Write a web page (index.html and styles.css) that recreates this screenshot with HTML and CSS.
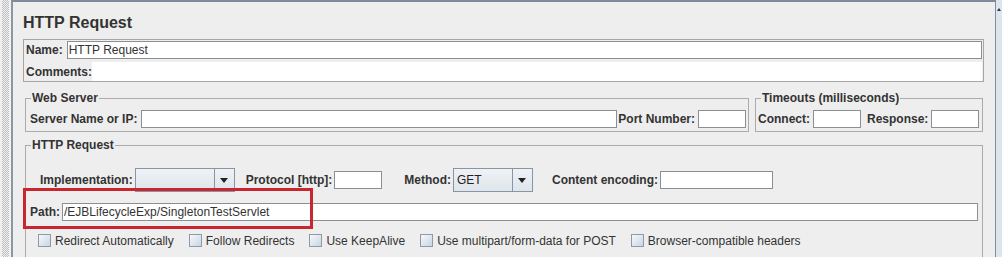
FILE: index.html
```html
<!DOCTYPE html>
<html lang="en">
<head>
  <meta charset="UTF-8">
  <title>HTTP Request</title>
  <link rel="stylesheet" href="styles.css">
</head>
<body>

<div class="frame">
  <div class="splitter"></div>

  <div class="panel">
    <h1 class="title">HTTP Request</h1>

    <!-- Name / comments -->
    <div class="name-box">
      <div class="name-row">
        <label class="label">Name:</label>
        <input class="field grow" value="HTTP Request">
      </div>
      <div class="comments-row">
        <label class="label">Comments:</label>
        <div class="comments"></div>
      </div>
    </div>

    <div class="server-row">
      <fieldset class="group web-server">
        <legend>Web Server</legend>
        <div class="fields">
          <label class="label">Server Name or IP:</label>
          <input class="field grow">
          <label class="label port-label">Port Number:</label>
          <input class="field small">
        </div>
      </fieldset>

      <fieldset class="group timeouts">
        <legend>Timeouts (milliseconds)</legend>
        <div class="fields">
          <label class="label">Connect:</label>
          <input class="field small">
          <label class="label response-label">Response:</label>
          <input class="field small">
        </div>
      </fieldset>
    </div>

    <fieldset class="group request">
      <legend>HTTP Request</legend>

      <div class="impl-row">
        <label class="label">Implementation:</label>
        <div class="combo impl-combo">
          <span class="combo-value"></span>
          <span class="combo-arrow"></span>
        </div>
        <label class="label protocol-label">Protocol [http]:</label>
        <input class="field small">
        <label class="label method-label">Method:</label>
        <div class="combo method-combo">
          <span class="combo-value">GET</span>
          <span class="combo-arrow"></span>
        </div>
        <label class="label encoding-label">Content encoding:</label>
        <input class="field encoding">
      </div>

      <div class="path-row">
        <label class="label">Path:</label>
        <input class="field grow" value="/EJBLifecycleExp/SingletonTestServlet">
      </div>

      <div class="checks">
        <label class="check"><span class="box"></span>Redirect Automatically</label>
        <label class="check"><span class="box"></span>Follow Redirects</label>
        <label class="check"><span class="box"></span>Use KeepAlive</label>
        <label class="check"><span class="box"></span>Use multipart/form-data for POST</label>
        <label class="check"><span class="box"></span>Browser-compatible headers</label>
      </div>
    </fieldset>
  </div>

  <div class="scrollbar"></div>
</div>

<!-- annotation drawn over the form -->
<div class="highlight"></div>

</body>
</html>
```

FILE: styles.css
```css
/* General */
* {
  box-sizing: border-box;
}
html {
  overflow: hidden;
}
body {
  margin: 0;
  width: 1002px;
  height: 257px;
  overflow: hidden;
  position: relative;
  background: #eeeeee;
  color: #333333;
  font-family: "Liberation Sans", Arial, sans-serif;
  font-size: 12px;
}
.frame {
  display: flex;
  height: 257px;
  overflow: hidden;
}
/* Left splitter and right scrollbar */
.splitter {
  width: 11px;
  flex: none;
  display: flex;
  padding-left: 2px;
  background: #f0f0f0;
}
.splitter::before {
  content: "";
  width: 7px;
  background: repeating-conic-gradient(#bdbdbd 0 25%, #f3f3f3 0 50%) 0 0 / 2px 2px;
}
.scrollbar {
  width: 6px;
  flex: none;
  position: relative;
  background: #dde6ef;
}
.scrollbar::before {
  content: "";
  position: absolute;
  top: 8px;
  left: 1px;
  border-left: 2px solid transparent;
  border-right: 2px solid transparent;
  border-bottom: 3px solid #333;
}
/* Main panel */
.panel {
  flex: 1;
  min-width: 0;
  overflow: hidden;
  border-top: 2px solid #7d8a98;
  border-left: 2px solid #8b97a4;
  border-right: 1px solid #7f8fa0;
  padding: 11px 11px 0 10px;
  background: #eeeeee;
}
.title {
  margin: 0 0 6px;
  font-size: 16px;
  line-height: 20px;
  font-weight: bold;
  color: #333333;
}
.label {
  font-weight: bold;
  white-space: nowrap;
  margin-right: 3px;
}
.field {
  height: 18px;
  border: 1px solid #8a8f95;
  padding: 0 1px;
  background: #ffffff;
  color: #333333;
  font-family: "Liberation Sans", Arial, sans-serif;
  font-size: 12px;
  outline: none;
}
.grow {
  flex: 1;
  min-width: 0;
}
.small {
  width: 48px;
}
.encoding {
  width: 113px;
}
/* Name / comments */
.name-box {
  border: 1px solid #a6a6a6;
  padding: 1px 1px 0 2px;
}
.name-row {
  display: flex;
  align-items: center;
  height: 18px;
}
.name-row .label {
  margin-right: 4px;
}
.comments-row {
  display: flex;
  align-items: center;
  height: 19px;
  margin-top: 3px;
}
.comments-row .label {
  margin-right: 0;
}
.comments {
  flex: 1;
  align-self: stretch;
  background: #ffffff;
}
/* Group boxes */
.group {
  margin: 0;
  padding: 0;
  min-width: 0;
  border: 1px solid #ababab;
}
.group legend {
  margin-left: 5px;
  padding: 0 1px;
  font-weight: bold;
  line-height: 14px;
}
.server-row {
  display: flex;
  gap: 6px;
  margin: 9px 1px 0 2px;
}
.web-server {
  flex: 1;
}
.timeouts {
  width: 228px;
  flex: none;
}
.fields {
  display: flex;
  align-items: center;
  padding: 5px 2px 3px 4px;
}
.web-server .fields .label:first-child {
  margin-right: 4px;
}
.port-label {
  margin-left: 1px;
}
.timeouts .fields {
  padding: 5px 3px 3px 2px;
}
.response-label {
  margin-left: 6px;
}
.request {
  margin: 6px 1px 0 2px;
  height: 125px;
}
/* Implementation row */
.impl-row {
  display: flex;
  align-items: center;
  height: 24px;
  margin-top: 16px;
  padding-left: 14px;
}
.impl-row .label {
  margin-right: 2px;
}
.protocol-label {
  margin-left: 11px;
}
.method-label {
  margin-left: 22px;
}
.encoding-label {
  margin-left: 19px;
}
.combo {
  display: flex;
  height: 24px;
  border: 1px solid #8796a7;
  background: linear-gradient(#eff2f5, #dfe5eb);
}
.impl-combo {
  width: 100px;
}
.method-combo {
  width: 80px;
}
.combo-value {
  flex: 1;
  padding-left: 3px;
  line-height: 22px;
  color: #222222;
}
.combo-arrow {
  width: 20px;
  display: flex;
  align-items: center;
  justify-content: center;
  border-left: 1px solid #8796a7;
}
.combo-arrow::before {
  content: "";
  border-left: 4px solid transparent;
  border-right: 4px solid transparent;
  border-top: 5px solid #222222;
}
/* Path row */
.path-row {
  display: flex;
  align-items: center;
  height: 18px;
  margin-top: 11px;
  padding: 0 4px 0 4px;
}
.path-row .label {
  margin-right: 2px;
}
/* Checkboxes */
.checks {
  display: flex;
  align-items: center;
  gap: 15px;
  height: 19px;
  margin-top: 10px;
  padding-left: 12px;
}
.check {
  display: flex;
  align-items: center;
  white-space: nowrap;
}
.box {
  width: 13px;
  height: 13px;
  margin-right: 4px;
  border: 1px solid #8e9aa8;
  background: linear-gradient(135deg, #f5f8fb, #c9d5e2);
}
/* Red annotation box */
.highlight {
  position: absolute;
  left: 23px;
  top: 188px;
  width: 290px;
  height: 41px;
  border: 3px solid #c9262f;
}
```
